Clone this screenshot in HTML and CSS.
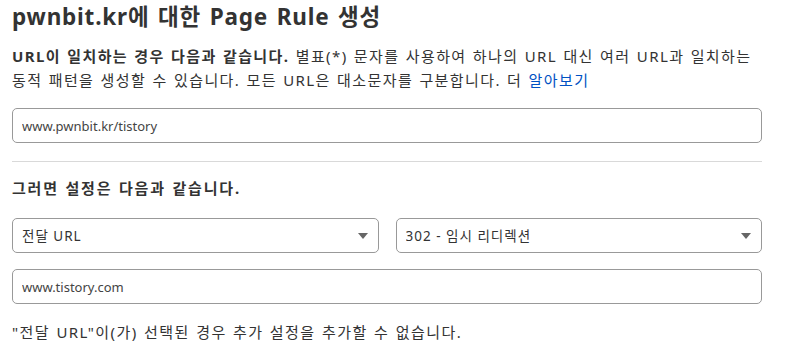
FILE: index.html
```html
<!DOCTYPE html>
<html lang="ko">
<head>
  <meta charset="UTF-8">
  <title>Page Rule</title>
  <link rel="stylesheet" href="styles.css">
</head>
<body>
  <div class="page">
    <h1 class="title">pwnbit.kr에 대한 Page Rule 생성</h1>
    <p class="desc"><b>URL이 일치하는 경우 다음과 같습니다.</b> 별표(*) 문자를 사용하여 하나의 URL 대신 여러 URL과 일치하는<br>동적 패턴을 생성할 수 있습니다. 모든 URL은 대소문자를 구분합니다. 더 <a href="#" class="link">알아보기</a></p>
    <input class="field" type="text" value="www.pwnbit.kr/tistory">
    <hr class="sep">
    <h3 class="subtitle">그러면 설정은 다음과 같습니다.</h3>
    <div class="row">
      <div class="select-wrap">
        <select class="select"><option>전달 URL</option></select>
      </div>
      <div class="select-wrap">
        <select class="select"><option>302 - 임시 리디렉션</option></select>
      </div>
    </div>
    <input class="field field-dest" type="text" value="www.tistory.com">
    <p class="note">"전달 URL"이(가) 선택된 경우 추가 설정을 추가할 수 없습니다.</p>
  </div>
</body>
</html>
```

FILE: styles.css
```css
body { margin: 0; background: #fff; color: #333; font-family: "Noto Sans", "Noto Sans CJK KR", sans-serif; }
.page { padding: 0 25px 0 12px; }
.title { margin: 0; font-size: 22.5px; line-height: 34px; font-weight: 700; letter-spacing: 0.8px; word-spacing: 2px; color: #333; }
.desc { margin: 10px 0 0; font-size: 15px; line-height: 24px; letter-spacing: 1.4px; word-spacing: 1px; white-space: nowrap; }
.desc b { font-weight: 700; }
.link { color: #0051c3; text-decoration: none; }
.field { display: block; box-sizing: border-box; width: 100%; height: 35px; margin-top: 16px; padding: 0 9px; border: 1px solid #999; border-radius: 5px; font: 13px "Noto Sans", "Noto Sans CJK KR", sans-serif; color: #444; }
.sep { margin: 18px 0 0; border: 0; border-top: 1px solid #d9d9d9; }
.subtitle { margin: 15px 0 0; font-size: 15px; line-height: 22px; font-weight: 700; letter-spacing: 1.8px; word-spacing: 1px; }
.row { display: flex; gap: 17px; margin-top: 19px; }
.select-wrap { flex: 1; position: relative; }
.select-wrap::after { content: ""; position: absolute; right: 11px; top: 15px; border-left: 5px solid transparent; border-right: 5px solid transparent; border-top: 6px solid #666; }
.select { display: block; box-sizing: border-box; width: 100%; height: 35px; padding: 0 9px; -webkit-appearance: none; appearance: none; background: #fff; border: 1px solid #999; border-radius: 5px; font: 13.5px "Noto Sans", "Noto Sans CJK KR", sans-serif; letter-spacing: 1px; color: #333; }
.field-dest { margin-top: 16px; }
.note { margin: 17px 0 0; font-size: 15px; line-height: 22px; letter-spacing: 1.45px; word-spacing: 1px; }
```
